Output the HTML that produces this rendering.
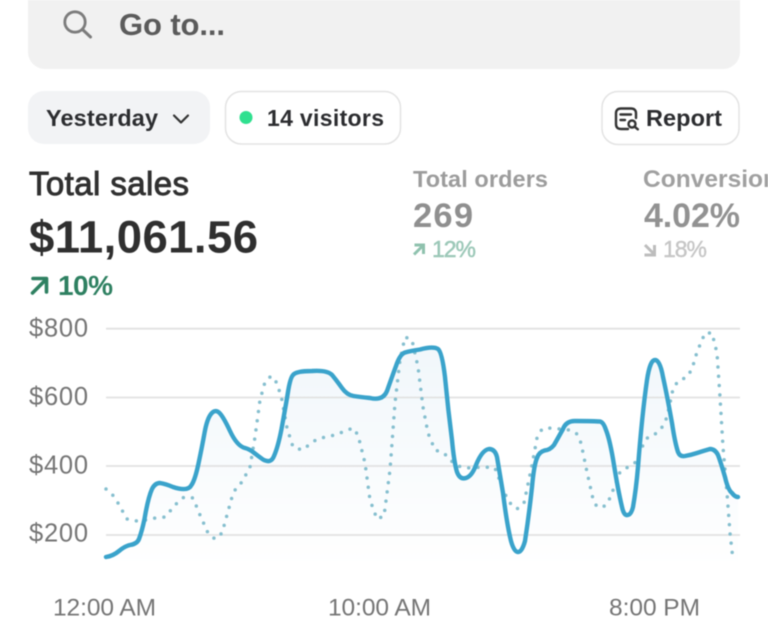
<!DOCTYPE html>
<html><head><meta charset="utf-8"><style>
html,body{margin:0;padding:0;background:#fff;width:768px;height:619px;overflow:hidden}
svg{display:block;filter:blur(.45px)}
text{font-family:"Liberation Sans",sans-serif}
.b{font-weight:700}
</style></head><body>
<svg width="768" height="619" viewBox="0 0 768 619" xmlns="http://www.w3.org/2000/svg">
<defs><linearGradient id="g" x1="0" y1="345" x2="0" y2="565" gradientUnits="userSpaceOnUse"><stop offset="0" stop-color="#f1f7fb"/><stop offset="1" stop-color="#ffffff"/></linearGradient></defs>
<rect x="28" y="-30" width="712" height="99" rx="17" fill="#f1f1f1"/>
<circle cx="75" cy="22" r="10.2" fill="none" stroke="#7c7c7c" stroke-width="2.8"/>
<path d="M82.5 29.5L90.5 37" stroke="#7c7c7c" stroke-width="3" stroke-linecap="round"/>
<text x="119" y="35" class="b" font-size="31" fill="#5b5b5b" textLength="106" lengthAdjust="spacing">Go to...</text>

<rect x="28" y="91" width="182" height="53" rx="16" fill="#f2f3f5"/>
<text x="46" y="126" class="b" font-size="23.400" fill="#2c2d30" textLength="112" lengthAdjust="spacing">Yesterday</text>
<path d="M174 115.500L181 122.500L188 115.500" fill="none" stroke="#333" stroke-width="2.200" stroke-linecap="round" stroke-linejoin="round"/>

<rect x="225.500" y="91.500" width="175" height="52.500" rx="16" fill="#fff" stroke="#e3e3e3" stroke-width="1.500"/>
<circle cx="246" cy="117.500" r="6.500" fill="#2fe08f"/>
<text x="267" y="126" class="b" font-size="23" fill="#2c2d30" textLength="117" lengthAdjust="spacing">14 visitors</text>

<rect x="602" y="91.500" width="137" height="53" rx="16" fill="#fff" stroke="#e3e3e3" stroke-width="1.500"/>
<path d="M628 129H621C617.500 129 616 127 616 124V113C616 110 618 108.500 621 108.500H631C634 108.500 636 110 636 113V118" fill="none" stroke="#333" stroke-width="2.400" stroke-linecap="round"/>
<path d="M620.500 114.500H631M620.500 120H625" stroke="#333" stroke-width="2.400" stroke-linecap="round"/>
<circle cx="632" cy="124" r="3.500" fill="none" stroke="#333" stroke-width="2.400"/>
<path d="M634.800 126.800L637.800 129.300" stroke="#333" stroke-width="2.400" stroke-linecap="round"/>
<text x="646" y="126" class="b" font-size="23.500" fill="#2c2d30" textLength="76" lengthAdjust="spacing">Report</text>

<text x="29" y="195" font-size="33" fill="#303030" stroke="#303030" stroke-width=".9" textLength="160" lengthAdjust="spacing">Total sales</text>
<text x="29" y="252.500" class="b" font-size="45.500" fill="#2f2f2f" textLength="229" lengthAdjust="spacing">$11,061.56</text>
<path d="M32.500 293L46 279.500M33 278.500H46.500V292" fill="none" stroke="#2e8061" stroke-width="3.600" stroke-linecap="round" stroke-linejoin="round"/>
<text x="58" y="295" class="b" font-size="28" fill="#2e8061" textLength="55" lengthAdjust="spacing">10%</text>

<text x="413" y="187" class="b" font-size="23.500" fill="#9c9c9c" textLength="135" lengthAdjust="spacing">Total orders</text>
<text x="413" y="227" class="b" font-size="34.500" fill="#8f8f8f" textLength="60" lengthAdjust="spacing">269</text>
<path d="M414 254.500L422.500 246M414.500 245H423.500V254" fill="none" stroke="#8fc2ae" stroke-width="3"/>
<text x="432" y="257" font-size="23" fill="#9cc8b8" stroke="#9cc8b8" stroke-width=".5" textLength="44" lengthAdjust="spacing">12%</text>

<text x="643" y="187" class="b" font-size="24.500" fill="#a0a0a0" textLength="135" lengthAdjust="spacing">Conversion</text>
<text x="644" y="227" class="b" font-size="34" fill="#929292" textLength="96" lengthAdjust="spacing">4.02%</text>
<path d="M645 245L653.500 253.500M644.500 255H654.500V245" fill="none" stroke="#bdbdbd" stroke-width="3"/>
<text x="663" y="257" font-size="23" fill="#c6c6c6" stroke="#c6c6c6" stroke-width=".4" textLength="44" lengthAdjust="spacing">18%</text>

<g font-size="25.500" fill="#757575">
<text x="29" y="336.700" textLength="59" lengthAdjust="spacing">$800</text>
<text x="29" y="405" textLength="59" lengthAdjust="spacing">$600</text>
<text x="29" y="473.500" textLength="59" lengthAdjust="spacing">$400</text>
<text x="29" y="541.700" textLength="59" lengthAdjust="spacing">$200</text>
<text x="53" y="615.700" font-size="24.500" textLength="103" lengthAdjust="spacing">12:00 AM</text>
<text x="328" y="615.700" font-size="24.500" textLength="103" lengthAdjust="spacing">10:00 AM</text>
<text x="609" y="615.700" font-size="24.500" textLength="91" lengthAdjust="spacing">8:00 PM</text>
</g>

<path fill="url(#g)" d="M106 557Q113 556 119 551Q125 546 130 545Q137 544 139 539Q142 531 144.500 519Q148 498 152 489Q155 483 160 483Q166 484 173 487Q188 492 191.500 485Q195 480 198.500 463.500Q202 447 204.500 433Q207 419 211 414Q215 409 219 412.500Q223 416 230 431Q237 446 245 448Q249 449 253 452Q258 456 263 459.500Q271 464 274 456Q278 447 281.500 429Q285 410 287.500 395Q290 378 293 375Q296 371 312 371Q328 370 332.500 375.500Q337 381 342 388Q347 395 353.500 396Q360 397 370 398Q383 401 387 391Q393 374 396 366Q400 354 405 352.500Q410 351 420 349.500Q433 346 438 349Q442 352 445 377Q448 409 452 440Q454 462 457 472Q460 480 466 478Q472 476 476 465Q482 450 489 449Q495 449 497 457Q500 475 503 493Q507 525 511 541Q514 552 518 552Q522 552 525 541Q529 515 532 487Q534 465 537 458Q539 452 544.500 450.500Q550 450 554 445Q558 438 563 429Q566 421 575 421Q590 421 599 421.500Q603 421 606 430Q610 440 614 465Q618 490 622 507Q624 516 627.500 515Q631 515 633 507Q636 490 638 467Q642 415 647 380Q650 360 655 360Q660 360 663 377Q667 395 672 423Q675 443 678 452Q680 457 685 456Q691 455 697 453Q703 451 710 449Q715 449 718 455Q721 463 725 477Q728 490 732 493Q735 497 738 497L738 570L106 570Z"/>

<g stroke="#e2e2e2" stroke-width="1.800">
<path d="M106 328.700H740"/><path d="M106 397.500H740"/><path d="M106 466H740"/><path d="M106 535H740"/>
</g>

<polyline fill="none" stroke="#86bfcf" stroke-width="3.500" stroke-linecap="round" stroke-linejoin="round" stroke-dasharray="0 9.300" points="106,489 112,494 118,503 127,519 137,521 146,520 155,518 165,517 177,503 184,497 193,498 200,515 208,533 215,539 222,533 232,497 236,488 242,482 250,467 255,437 260,400 265,382 271,376 277,383 282,400 287,428 293,447 302,450 317,439 335,435 353,428 358,435 365,463 370,500 377,519 384,516 390,470 395,403 400,360 405,337 412,340 418,367 423,407 428,433 435,450 444,453 450,460 458,466 466,468 485,467 495,468 505,494 510,503 517,509 524,503 532,465 537,438 542,429 551,428 560,429 570,430 577,434 581,443 587,472 593,499 597,507 605,506 610,498 620,472 628,467 636,462 643,445 648,437 657,433 663,426 667,417 673,389 678,381 687,377 692,369 697,352 705,333 712,333 717,353 720,397 723,447 727,493 730,533 733,560"/>

<path fill="none" stroke="#3aa3cb" stroke-width="4.400" stroke-linecap="round" stroke-linejoin="round" d="M106 557Q113 556 119 551Q125 546 130 545Q137 544 139 539Q142 531 144.500 519Q148 498 152 489Q155 483 160 483Q166 484 173 487Q188 492 191.500 485Q195 480 198.500 463.500Q202 447 204.500 433Q207 419 211 414Q215 409 219 412.500Q223 416 230 431Q237 446 245 448Q249 449 253 452Q258 456 263 459.500Q271 464 274 456Q278 447 281.500 429Q285 410 287.500 395Q290 378 293 375Q296 371 312 371Q328 370 332.500 375.500Q337 381 342 388Q347 395 353.500 396Q360 397 370 398Q383 401 387 391Q393 374 396 366Q400 354 405 352.500Q410 351 420 349.500Q433 346 438 349Q442 352 445 377Q448 409 452 440Q454 462 457 472Q460 480 466 478Q472 476 476 465Q482 450 489 449Q495 449 497 457Q500 475 503 493Q507 525 511 541Q514 552 518 552Q522 552 525 541Q529 515 532 487Q534 465 537 458Q539 452 544.500 450.500Q550 450 554 445Q558 438 563 429Q566 421 575 421Q590 421 599 421.500Q603 421 606 430Q610 440 614 465Q618 490 622 507Q624 516 627.500 515Q631 515 633 507Q636 490 638 467Q642 415 647 380Q650 360 655 360Q660 360 663 377Q667 395 672 423Q675 443 678 452Q680 457 685 456Q691 455 697 453Q703 451 710 449Q715 449 718 455Q721 463 725 477Q728 490 732 493Q735 497 738 497"/>
</svg>
</body></html>
